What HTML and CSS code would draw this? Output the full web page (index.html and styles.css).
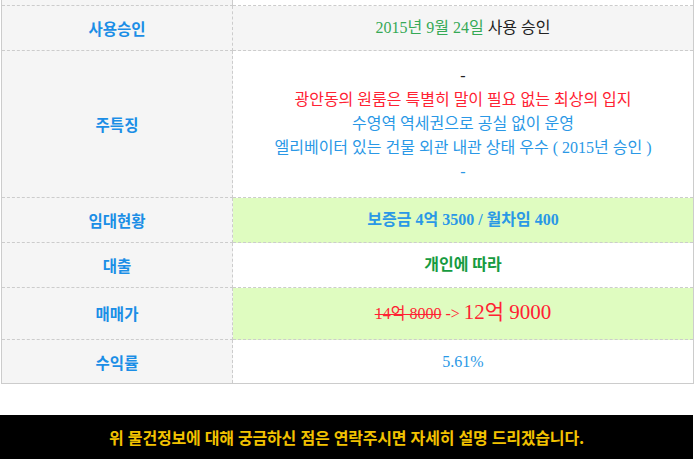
FILE: index.html
```html
<!DOCTYPE html>
<html lang="ko">
<head>
<meta charset="utf-8">
<link rel="stylesheet" href="styles.css">
</head>
<body>
<div class="wrap">
  <table class="info">
    <colgroup><col class="c-label"><col class="c-value"></colgroup>
    <tr class="stub"><td class="label"><div class="stub-in"></div></td><td class="value"><div class="stub-in"></div></td></tr>
    <tr>
      <td class="label gray">사용승인</td>
      <td class="value gray"><span class="green">2015년 9월 24일</span> <span class="dark">사용 승인</span></td>
    </tr>
    <tr>
      <td class="label">주특징</td>
      <td class="value multi">
        <div class="dark">-</div>
        <div class="red">광안동의 원룸은 특별히 말이 필요 없는 최상의 입지</div>
        <div class="blue">수영역 역세권으로 공실 없이 운영</div>
        <div class="blue">엘리베이터 있는 건물 외관 내관 상태 우수 ( 2015년 승인 )</div>
        <div class="blue">-</div>
      </td>
    </tr>
    <tr>
      <td class="label">임대현황</td>
      <td class="value lime blue bold">보증금 4억 3500 / 월차임 400</td>
    </tr>
    <tr>
      <td class="label">대출</td>
      <td class="value deepgreen bold">개인에 따라</td>
    </tr>
    <tr class="price">
      <td class="label">매매가</td>
      <td class="value lime red"><s>14억 8000</s> -&gt; <span class="big">12억 9000</span></td>
    </tr>
    <tr class="last">
      <td class="label">수익률</td>
      <td class="value blue">5.61%</td>
    </tr>
  </table>
  <div class="notice">위 물건정보에 대해 궁금하신 점은 연락주시면 자세히 설명 드리겠습니다.</div>
</div>
</body>
</html>
```

FILE: styles.css
```css
html, body {
  margin: 0;
  padding: 0;
  background: #ffffff;
}

.wrap {
  margin-left: 1px;
  width: 693px;
}

.info {
  width: 693px;
  border-collapse: collapse;
  table-layout: fixed;
  border-left: 1px solid #cccccc;
  border-right: 1px solid #cccccc;
  border-bottom: 1px solid #cccccc;
}

.c-label { width: 231px; }

.info td {
  border: 1px dashed #cccccc;
  text-align: center;
  vertical-align: middle;
  padding: 10px 0;
  line-height: 24px;
  height: 24px;
}

.info .stub td {
  border-top: none;
  padding: 0;
  line-height: 0;
  height: auto;
}

.stub-in { height: 5px; }

.label {
  background: #f5f5f5;
  color: #1b8ee6;
  font-family: "Noto Sans CJK KR", "Noto Sans", sans-serif;
  font-weight: bold;
  font-size: 15.5px;
}

.value {
  background: #ffffff;
  font-family: "Liberation Serif", "Noto Sans CJK KR", serif;
  font-size: 16px;
}

.value.gray { background: #f5f5f5; }
.value.lime { background: #dffcc0; }

.info td.multi {
  padding: 13px 0;
}

.info .price td {
  line-height: 31px;
  height: 31px;
}

.info .last td {
  padding: 10px 0 9px;
}

.green { color: #35a956; }
.dark { color: #222222; }
.red { color: #ff2233; }
.blue { color: #2a98e6; }
.deepgreen { color: #169b3f; }
.bold { font-weight: bold; }

s {
  text-decoration: line-through;
}

.big {
  font-size: 21px;
  line-height: 1;
}

.notice {
  margin-top: 31px;
  width: 693px;
  margin-left: -1px;
  height: 44px;
  background: #000000;
  color: #f2c200;
  font-family: "Noto Sans CJK KR", sans-serif;
  font-weight: bold;
  font-size: 16px;
  line-height: 44px;
  text-align: center;
  letter-spacing: -0.2px;
}
```
